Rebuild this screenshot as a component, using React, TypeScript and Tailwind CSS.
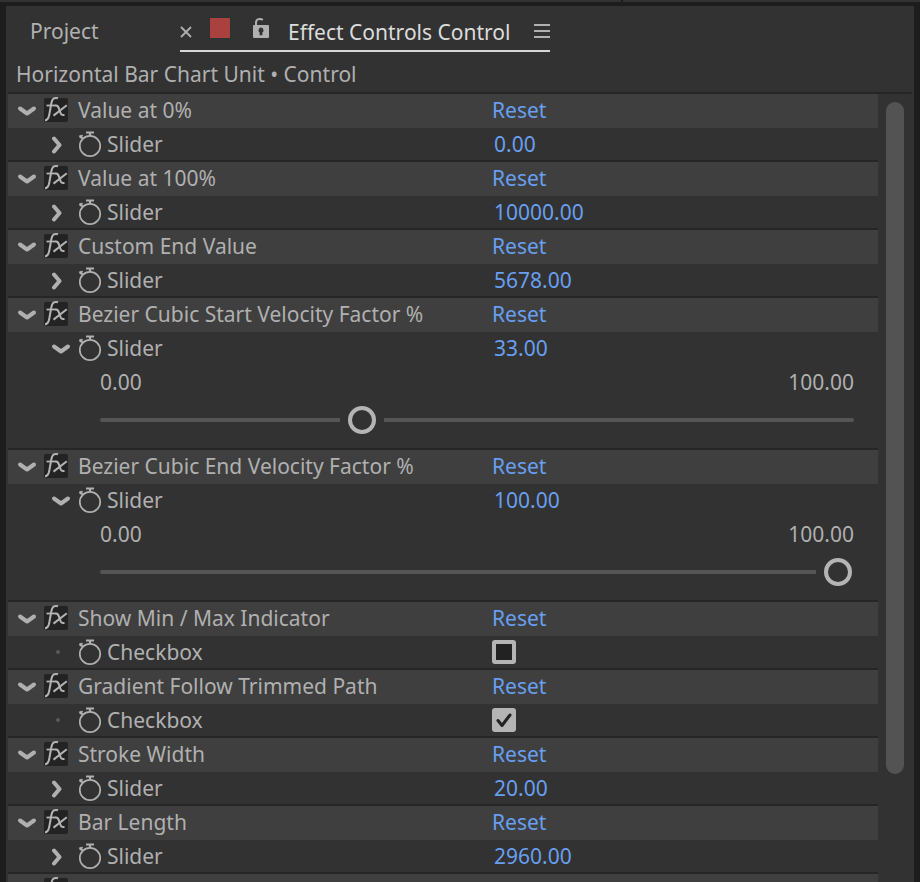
import { useState } from "react";

type Param = {
  kind: "slider" | "checkbox";
  value?: string;
  open?: boolean;
  position?: number;
  checked?: boolean;
};

type Effect = { name: string; param: Param };

const effects: Effect[] = [
  { name: "Value at 0%", param: { kind: "slider", value: "0.00" } },
  { name: "Value at 100%", param: { kind: "slider", value: "10000.00" } },
  { name: "Custom End Value", param: { kind: "slider", value: "5678.00" } },
  { name: "Bezier Cubic Start Velocity Factor %", param: { kind: "slider", value: "33.00", open: true, position: 33 } },
  { name: "Bezier Cubic End Velocity Factor %", param: { kind: "slider", value: "100.00", open: true, position: 100 } },
  { name: "Show Min / Max Indicator", param: { kind: "checkbox", checked: false } },
  { name: "Gradient Follow Trimmed Path", param: { kind: "checkbox", checked: true } },
  { name: "Stroke Width", param: { kind: "slider", value: "20.00" } },
  { name: "Bar Length", param: { kind: "slider", value: "2960.00" } },
  { name: "Standards Text Color", param: { kind: "slider", value: "0.00" } },
];

function Chevron({ open }: { open: boolean }) {
  return (
    <svg viewBox="0 0 20 20" className="size-5" fill="none" stroke="#b0b0b0" strokeWidth="4" strokeLinecap="round" strokeLinejoin="round" aria-hidden="true">
      {open ? <path d="M3 8.5 L10 13.5 L17 8.5" /> : <path d="M3 4.500 L8.500 11 L3 17.500" />}
    </svg>
  );
}

function FxIcon() {
  return (
    <svg viewBox="0 0 24 26" className="h-[26px] w-6 overflow-visible" aria-hidden="true">
      <rect x="0" y="1" width="24" height="24" rx="2" fill="#232323" />
      <g fill="none" stroke="#b4b4b4" strokeWidth="2" strokeLinecap="butt">
        <path d="M1 23.200 C4 23.200 4.600 21 5.200 18 L7.400 6 C8 2.500 9.800 0 14 1.300" />
        <path d="M2.500 8.500 H12" strokeWidth="1.800" />
        <path d="M11.500 8.500 C14 8.200 14.600 10 15.500 13 C16.500 16.500 17 18.600 20.500 18" />
        <path d="M22.800 8.300 L9.500 18.600" />
      </g>
    </svg>
  );
}

function Stopwatch() {
  return (
    <svg viewBox="0 0 24 28" className="h-7 w-6" fill="none" stroke="#b0b0b0" strokeWidth="1.7" aria-hidden="true">
      <circle cx="12" cy="16" r="10.200" />
      <path d="M8 2.500 H16 M12 2.500 V6" strokeWidth="2.200" />
      <path d="M1.500 5.500 L4.500 8.500 M4.500 5.200 L1.800 8" strokeWidth="1.800" />
    </svg>
  );
}

function SliderTrack({ label, initial }: { label: string; initial: number }) {
  const [position, setPosition] = useState(initial);
  return (
    <div className="pr-6 pl-[92px]">
      <div className="flex h-9 items-center justify-between">
        <span>0.00</span>
        <span>100.00</span>
      </div>
      <div className="h-12 pt-[6px]">
        <div className="relative flex h-7 w-full items-center">
          <div className="h-1 w-full rounded-full bg-[#555555]" />
          <div className="absolute inset-y-0 right-4 left-7">
            <div
              className="absolute top-0 flex h-7 w-11 -translate-x-1/2 items-center justify-center bg-[#323232]"
              style={{ left: `${position}%` }}
            >
              <span className="size-7 rounded-full border-4 border-[#b4b4b4]" />
            </div>
          </div>
          <input
            type="range"
            min={0}
            max={100}
            value={position}
            onChange={(e) => setPosition(Number(e.target.value))}
            aria-label={label}
            className="absolute inset-0 w-full cursor-pointer opacity-0"
          />
        </div>
      </div>
    </div>
  );
}

function CheckField({ id, initial }: { id: string; initial: boolean }) {
  const [checked, setChecked] = useState(initial);
  return (
    <span className="grid size-6">
      <input
        id={id}
        type="checkbox"
        checked={checked}
        onChange={() => setChecked(!checked)}
        className="col-start-1 row-start-1 size-6 appearance-none rounded-[3px] border-4 border-[#b4b4b4] bg-[#222222] checked:bg-[#b4b4b4]"
      />
      {checked && (
        <svg viewBox="0 0 24 24" className="pointer-events-none col-start-1 row-start-1 size-6" fill="none" stroke="#222222" strokeWidth="3" strokeLinecap="round" strokeLinejoin="round" aria-hidden="true">
          <path d="M6 12.500 L10 17.500 L18 7" />
        </svg>
      )}
    </span>
  );
}

function EffectGroup({ effect, index }: { effect: Effect; index: number }) {
  const { name, param } = effect;
  const [open, setOpen] = useState(param.open ?? false);
  const id = `param-${index}`;
  return (
    <section className="border-t-2 border-[#262626]">
      <div className="flex h-[34px] items-center bg-[#3f3f3f] pb-[2px]">
        <div className="flex w-[484px] items-center pl-[9px]">
          <button type="button" aria-label={`Collapse ${name}`} className="mr-[7px]">
            <Chevron open />
          </button>
          <FxIcon />
          <h2 className="pl-[10px] whitespace-nowrap">{name}</h2>
        </div>
        <button type="button" className="text-[#689ff0]">Reset</button>
      </div>
      <div className="flex h-8 items-center">
        <div className="flex w-[484px] items-center pl-[43px]">
          {param.kind === "slider" ? (
            <button type="button" aria-label={`Toggle ${name} slider`} onClick={() => setOpen(!open)}>
              <Chevron open={open} />
            </button>
          ) : (
            <span className="flex w-5 pl-[5px]">
              <span className="size-1 rounded-full bg-[#5a5a5a]" />
            </span>
          )}
          <button type="button" aria-label={`Animate ${name}`} className="mr-[5px] ml-[7px]">
            <Stopwatch />
          </button>
          <label htmlFor={id}>{param.kind === "slider" ? "Slider" : "Checkbox"}</label>
        </div>
        {param.kind === "slider" ? (
          <input id={id} type="text" defaultValue={param.value} className="w-32 bg-transparent pl-[2px] text-[#689ff0] outline-none" />
        ) : (
          <CheckField id={id} initial={param.checked ?? false} />
        )}
      </div>
      {open && <SliderTrack label={name} initial={param.position ?? 0} />}
    </section>
  );
}

export default function App() {
  return (
    <div className="flex h-screen flex-col overflow-hidden bg-[#1d1d1d] font-['Noto_Sans',sans-serif] text-[21px] leading-7 text-[#b0b0b0]">
      <div className="flex h-[2px] shrink-0 gap-[2px]">
        <div className="w-[621px] bg-[#323232]" />
        <div className="flex-1 bg-[#323232]" />
      </div>
      <main className="mx-[6px] mt-1 flex min-h-0 flex-1 flex-col bg-[#323232] px-[2px]">
        <nav className="flex h-[46px] shrink-0 items-stretch">
          <button type="button" className="w-[172px] pt-1 pl-[22px] text-left">Project</button>
          <div className="flex items-center border-b-2 border-[#d6d6d6] pt-2">
            <button type="button" aria-label="Close panel" className="w-[30px]">
              <svg viewBox="0 0 12 12" className="size-3" stroke="#b0b0b0" strokeWidth="1.800" aria-hidden="true">
                <path d="M1 1 L11 11 M11 1 L1 11" />
              </svg>
            </button>
            <span className="mb-2 size-5 bg-[#a9413f]" />
            <button type="button" aria-label="Lock panel" className="mr-[18px] mb-2 ml-[22px]">
              <svg viewBox="0 0 18 20" className="h-5 w-[18px]" aria-hidden="true">
                <path d="M4 9 V4.500 C4 0.500 9 0.300 10.800 2" fill="none" stroke="#b0b0b0" strokeWidth="2" />
                <path fillRule="evenodd" fill="#b0b0b0" d="M2 7 H16 Q17 7 17 8 V19 Q17 20 16 20 H2 Q1 20 1 19 V8 Q1 7 2 7 Z M9 9.600 A2.800 2.800 0 0 0 7.600 14.600 V17.200 H10.400 V14.600 A2.800 2.800 0 0 0 9 9.600 Z" />
              </svg>
            </button>
            <h1 className="whitespace-nowrap text-[#dcdcdc]">Effect Controls Control</h1>
            <button type="button" aria-label="Panel menu" className="mb-[2px] ml-6">
              <svg viewBox="0 0 16 14" className="h-[14px] w-4" stroke="#b0b0b0" strokeWidth="2" aria-hidden="true">
                <path d="M0 1 H16 M0 7 H16 M0 13 H16" />
              </svg>
            </button>
          </div>
        </nav>
        <div className="h-10 shrink-0 pt-2 pl-2 whitespace-nowrap">Horizontal Bar Chart Unit • Control</div>
        <div className="flex min-h-0 flex-1 overflow-hidden">
          <div className="min-w-0 flex-1">
            {effects.map((effect, index) => (
              <EffectGroup key={effect.name} effect={effect} index={index} />
            ))}
          </div>
          <div className="w-[34px] border-t-2 border-[#262626] pt-2 pl-2">
            <div className="h-[672px] w-[18px] rounded-full bg-[#535353]" />
          </div>
        </div>
      </main>
    </div>
  );
}
